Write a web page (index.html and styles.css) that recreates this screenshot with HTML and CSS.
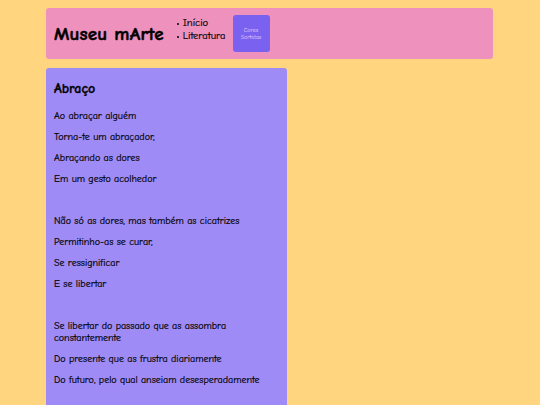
FILE: index.html
```html
<!DOCTYPE html>
<html lang="pt">
<head>
<meta charset="utf-8">
<title>Museu mArte</title>
<link rel="stylesheet" href="styles.css">
</head>
<body>
<div class="page">
  <header class="header">
    <h1 class="title">Museu mArte</h1>
    <ul class="nav">
      <li>Início</li>
      <li>Literatura</li>
    </ul>
    <button class="btn">Cores Sortidas</button>
  </header>
  <main class="card">
    <h2 class="poem-title">Abraço</h2>
    <p>Ao abraçar alguém</p>
    <p>Torna-te um abraçador,</p>
    <p>Abraçando as dores</p>
    <p>Em um gesto acolhedor</p>
    <p class="blank">&nbsp;</p>
    <p>Não só as dores, mas também as cicatrizes</p>
    <p>Permitinho-as se curar,</p>
    <p>Se ressignificar</p>
    <p>E se libertar</p>
    <p class="blank">&nbsp;</p>
    <p>Se libertar do passado que as assombra constantemente</p>
    <p>Do presente que as frustra diariamente</p>
    <p>Do futuro, pelo qual anseiam desesperadamente</p>
  </main>
</div>
</body>
</html>
```
FILE: styles.css
```css
html, body {
  margin: 0;
  padding: 0;
  background: #ffd580;
}
body {
  font-family: "Comic Sans MS", "Comic Neue", "Open Sans", "DejaVu Sans", sans-serif;
  color: #000;
}
.page {
  padding: 8px 47px 0 46px;
  display: flex;
  flex-direction: column;
  gap: 9px;
  align-items: flex-start;
}
.header {
  align-self: stretch;
  height: 51px;
  background: #ee91bc;
  border-radius: 3px;
  display: flex;
  align-items: center;
  padding-left: 8px;
  box-sizing: border-box;
}
.title {
  margin: 0;
  font-size: 19px;
  font-weight: bold;
  letter-spacing: 0.2px;
  -webkit-text-stroke: 0.5px #000;
}
.nav {
  margin: 0 0 8px 12px;
  padding-left: 7px;
  font-size: 10.5px;
  line-height: 13px;
  list-style: none;
  -webkit-text-stroke: 0.2px #000;
}
.nav li {
  position: relative;
}
.nav li::before {
  content: "";
  position: absolute;
  left: -6px;
  top: 6px;
  width: 2px;
  height: 2px;
  background: #000;
  border-radius: 1px;
}
.btn {
  margin-left: 7px;
  width: 37px;
  height: 37px;
  border: none;
  border-radius: 3px;
  background: #7b61ef;
  color: #e6dcff;
  font-family: inherit;
  font-size: 6px;
  line-height: 7px;
  padding: 0 3px;
}
.card {
  width: 241px;
  box-sizing: border-box;
  background: #9f8bf5;
  border-radius: 3px 3px 0 0;
  padding: 12px 8px 20px 8px;
}
.poem-title {
  margin: 0 0 12px 0;
  font-size: 14px;
  font-weight: bold;
  line-height: 18px;
  -webkit-text-stroke: 0.3px #000;
}
.card p {
  margin: 0 0 9px 0;
  font-size: 10px;
  line-height: 12px;
  -webkit-text-stroke: 0.2px #000;
}
```
